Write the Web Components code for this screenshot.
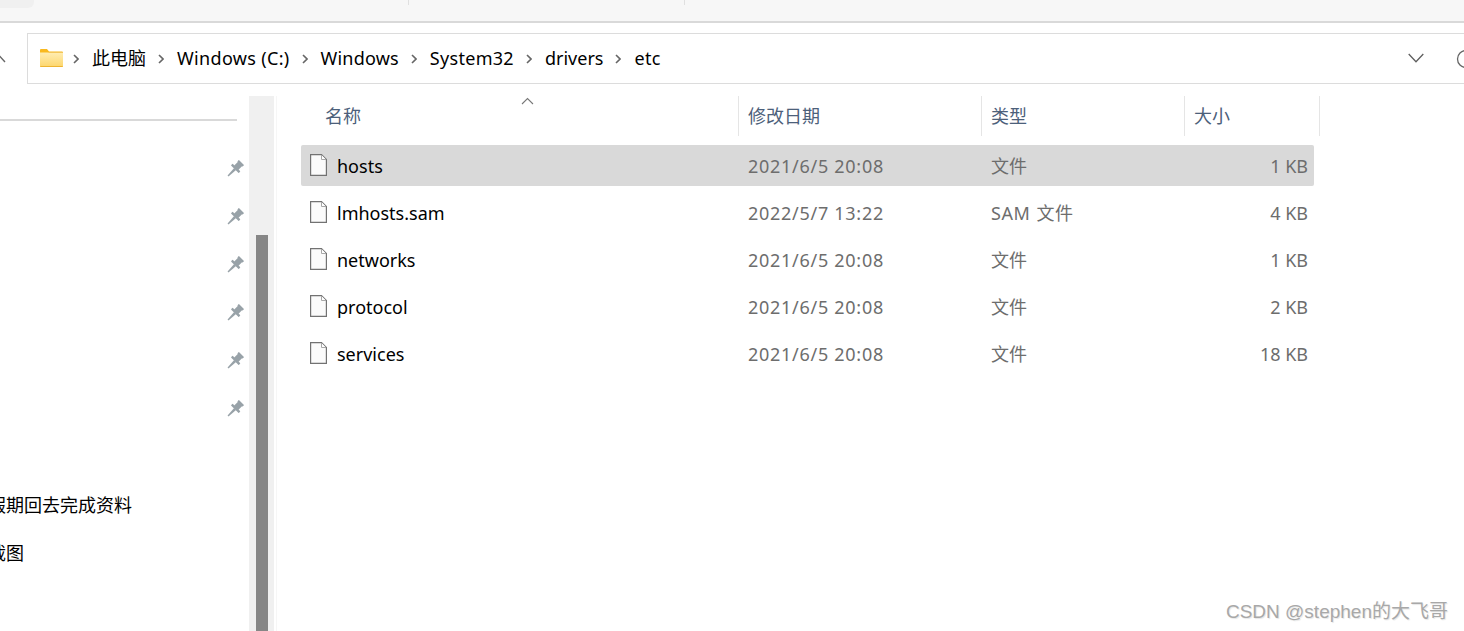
<!DOCTYPE html>
<html><head><meta charset="utf-8">
<style>
html,body{margin:0;padding:0;background:#fff;overflow:hidden}
body{font:18px "Noto Sans","Noto Sans CJK SC",sans-serif;color:#000}
</style></head>
<body>
<x-explorer>
  <x-tabstrip slot="top"></x-tabstrip>
  <x-address slot="top">
    <x-crumb>此电脑</x-crumb><x-crumb style="letter-spacing:.33px">Windows (C:)</x-crumb><x-crumb style="letter-spacing:.2px">Windows</x-crumb><x-crumb style="letter-spacing:.3px">System32</x-crumb><x-crumb>drivers</x-crumb><x-crumb style="letter-spacing:.3px">etc</x-crumb>
  </x-address>
  <x-sidebar slot="side">
    <x-navitem pinned></x-navitem><x-navitem pinned></x-navitem><x-navitem pinned></x-navitem><x-navitem pinned></x-navitem><x-navitem pinned></x-navitem><x-navitem pinned></x-navitem>
    <x-navitem></x-navitem>
    <x-navitem>假期回去完成资料</x-navitem>
    <x-navitem>截图</x-navitem>
  </x-sidebar>
  <x-scroll slot="side"></x-scroll>
  <x-filelist slot="main">
    <x-file selected name="hosts" date="2021/6/5 20:08" type="文件" size="1 KB"></x-file>
    <x-file name="lmhosts.sam" date="2022/5/7 13:22" type="SAM 文件" size="4 KB"></x-file>
    <x-file name="networks" date="2021/6/5 20:08" type="文件" size="1 KB"></x-file>
    <x-file name="protocol" date="2021/6/5 20:08" type="文件" size="2 KB"></x-file>
    <x-file name="services" date="2021/6/5 20:08" type="文件" size="18 KB"></x-file>
  </x-filelist>
  <x-watermark slot="over">CSDN @stephen的大飞哥</x-watermark>
</x-explorer>
<script>
function def(name, html, init){
  customElements.define(name, class extends HTMLElement{
    constructor(){super();this.attachShadow({mode:'open'}).innerHTML=html;}
    connectedCallback(){ if(init) init(this); }
  });
}
def('x-explorer',`<style>
:host{display:flex;flex-direction:column;width:1464px;height:631px;overflow:hidden;position:relative;background:#fff}
.body{flex:1;display:flex;min-height:0}
.side{display:flex;flex:none}
.main{flex:1;min-width:0}
</style>
<slot name="top"></slot>
<div class="body"><div class="side"><slot name="side"></slot></div><div class="main"><slot name="main"></slot></div></div>
<slot name="over"></slot>`);

def('x-tabstrip',`<style>
:host{display:flex;flex:none;height:21px;background:#f7f7f7;border-bottom:2px solid #d9d9d9}
.cur{width:34px;height:8px;background:#f0f0f0;border-radius:0 0 6px 0}
.tab{height:5px;border-right:1px solid #e0e0e0}
.a{width:374px}.b{width:275px}
</style><div class="cur"></div><div class="tab a"></div><div class="tab b"></div>`);

def('x-address',`<style>
:host{display:flex;flex:none;height:73px;padding:10px 0 12px;box-sizing:border-box;align-items:stretch;overflow:hidden}
.up{flex:none;width:27px;display:flex;align-items:center}
.up svg{display:block;margin-left:-6px}
.bar{flex:1;min-width:0;display:flex;align-items:center;border:1px solid #dcdcdc;border-right:0;padding-left:12px;margin-right:-40px}
.folder{flex:none;display:block;margin-right:-2px;margin-top:-2px}
.crumbs{flex:1;display:flex;align-items:center}
.drop{flex:none;display:block;margin-right:32px;margin-top:-1px}
.ref{flex:none;display:block;margin-right:28px}
</style>
<div class="up"><svg width="12" height="8" viewBox="0 0 12 8"><path d="M1 7 6 1.500 11 7" fill="none" stroke="#666" stroke-width="1.400"/></svg></div>
<div class="bar">
<svg class="folder" width="23" height="18" viewBox="0 0 23 18"><defs><linearGradient id="g" x1="0" y1="0" x2="0" y2="1"><stop offset="0" stop-color="#ffedb2"/><stop offset="1" stop-color="#fdd66c"/></linearGradient></defs><path d="M0 1Q0 0 1 0H7L9 2.500H22Q23 2.500 23 3.500V4H0Z" fill="#f9b91f"/><path d="M0 3.500H23V17Q23 18 22 18H1Q0 18 0 17Z" fill="url(#g)"/><path d="M8.500 3H23V4H8.500Z" fill="#f3c659"/><path d="M0 17H23Q23 18 22 18H1Q0 18 0 17Z" fill="#eeb431"/></svg>
<div class="crumbs"><slot></slot></div>
<svg class="drop" width="16" height="10" viewBox="0 0 16 10"><path d="M.7 1 8 8.700 15.300 1" fill="none" stroke="#5f5f5f" stroke-width="1.300"/></svg>
<svg class="ref" width="20" height="20" viewBox="0 0 20 20"><circle cx="10" cy="10" r="8.500" fill="none" stroke="#666" stroke-width="1.300"/></svg>
</div>`);

def('x-crumb',`<style>
:host{display:inline-flex;align-items:center;color:#000;white-space:nowrap;font-size:18px;line-height:24px;padding-bottom:2px}
svg{display:block;margin:2px 13px 0 12px;flex:none}
</style><svg width="6" height="10" viewBox="0 0 6 10"><path d="M1 1 5 5 1 9" fill="none" stroke="#666" stroke-width="1.600"/></svg><slot></slot>`);

def('x-sidebar',`<style>
:host{display:block;width:249px;box-sizing:border-box;padding-top:23px;overflow:hidden;flex:none}
.rule{height:2px;width:237px;background:#d9d9d9;margin-bottom:24px}
</style><div class="rule"></div><slot></slot>`);

def('x-navitem',`<style>
:host{display:flex;align-items:center;justify-content:space-between;height:48px;margin-left:-12px;padding-right:4px;white-space:nowrap;font-size:18px;font-family:"Noto Sans CJK SC","Noto Sans",sans-serif;color:#000}
span{padding-bottom:2px}
svg{display:none;flex:none}
:host([pinned]) svg{display:block}
</style><span><slot></slot></span><svg width="18" height="18" viewBox="0 0 18 18"><g transform="translate(9.500 7.500) rotate(45)" fill="#98a2a8"><rect x="-3.700" y="-7" width="7.400" height="2.200" rx=".5"/><rect x="-3" y="-5.500" width="6" height="6"/><rect x="-5.500" y="0" width="11" height="2.400" rx=".5"/><path d="M-1.400 2H1.400L.6 12H-.6Z"/></g></svg>`);

def('x-scroll',`<style>
:host{display:flex;flex:none;width:28px}
.track{flex:none;width:25px;background:#f0f0f0;padding-top:139px;box-sizing:border-box}
.thumb{width:12px;height:400px;margin-left:7px;background:#868686}
.line{flex:none;width:1px;margin-left:2px;background:#f6f6f6}
</style><div class="track"><div class="thumb"></div></div><div class="line"></div>`);

def('x-filelist',`<style>
:host{display:block}
.head{display:grid;grid-template-columns:438px 243px 203px 135px;height:40px;margin-left:24px;margin-bottom:9px;width:1019px}
.h{box-sizing:border-box;padding:0 0 2px 9px;display:flex;align-items:center;border-right:1px solid #e5e5e5;color:#4c607a;font-size:18px;font-family:"Noto Sans CJK SC","Noto Sans",sans-serif;position:relative;white-space:nowrap}
.h.n{padding-left:24px}
.caret{position:absolute;left:220px;top:1px;display:block}
.rows{display:flex;flex-direction:column;gap:6px;margin-left:24px;width:1013px}
</style>
<div class="head"><div class="h n">名称<svg class="caret" width="13" height="8" viewBox="0 0 13 8"><path d="M1 7 6.500 1.500 12 7" fill="none" stroke="#777" stroke-width="1.100"/></svg></div><div class="h">修改日期</div><div class="h">类型</div><div class="h">大小</div></div>
<div class="rows"><slot></slot></div>`);

def('x-file',`<style>
:host{display:grid;grid-template-columns:437px 243px 203px 130px;height:41px;align-items:center;border-radius:2px;font-size:18px;color:#6d6d6d;white-space:nowrap}
:host([selected]){background:#d9d9d9}
.n{display:flex;align-items:center;color:#000;padding-left:9px}
.n svg{display:block;flex:none;margin-right:10px;margin-top:-1px}
.d,.t{padding-left:10px}
.d{letter-spacing:.72px}
.t{padding-bottom:2px}
.t.w{letter-spacing:.5px;word-spacing:1px}
.s{text-align:right;padding-right:6px}
</style>
<div class="n"><svg width="17" height="22" viewBox="0 0 17 22"><path d="M.6.600H11.500L16.400 5.500V21.400H.6Z" fill="#fbfbfb" stroke="#727272" stroke-width="1.200"/><path d="M11.500 1V5.500H16" fill="#fff" stroke="#a8a8a8"/></svg><span id="n"></span></div>
<div class="d" id="d"></div><div class="t" id="t"></div><div class="s" id="s"></div>`,
el=>{const r=el.shadowRoot;for(const[k,a]of[['n','name'],['d','date'],['t','type'],['s','size']])r.getElementById(k).textContent=el.getAttribute(a);
if(el.getAttribute('type').includes(' '))r.getElementById('t').classList.add('w');});

def('x-watermark',`<style>
:host{position:absolute;right:16px;top:599px;font:19px/26px "Liberation Sans","Noto Sans CJK SC",sans-serif;color:#a8a8a8;text-shadow:1px 1px 1px #e6e6e6;white-space:nowrap}
</style><slot></slot>`);
</script>
</body></html>
